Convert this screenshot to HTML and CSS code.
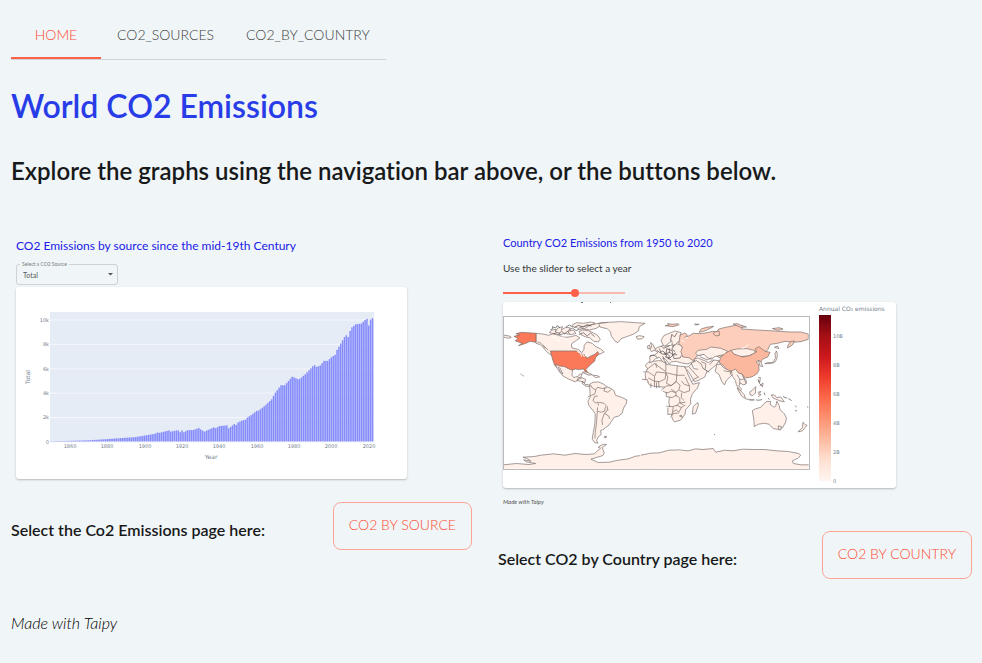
FILE: index.html
```html
<!DOCTYPE html>
<html lang="en">
<head>
<meta charset="utf-8">
<title>World CO2 Emissions</title>
<link rel="stylesheet" href="styles.css">
</head>
<body>
<nav class="tabs">
  <a class="tab tab-active" href="#home">HOME</a>
  <a class="tab" href="#sources">CO2_SOURCES</a>
  <a class="tab" href="#countries">CO2_BY_COUNTRY</a>
</nav>
<main>
  <h1>World CO2 Emissions</h1>
  <h2>Explore the graphs using the navigation bar above, or the buttons below.</h2>
  <div class="columns">
    <section class="column">
      <div class="preview preview-source">
        <h3 class="preview-title">CO2 Emissions by source since the mid-19th Century</h3>
        <div class="field">
          <label for="source">Select a CO2 Source</label>
          <select id="source"><option>Total</option></select>
          <svg class="caret" viewBox="0 0 5 3" aria-hidden="true"><path d="M0 0H5L2.500 2.500Z"/></svg>
        </div>
        <div class="card">
          <svg class="chart" viewBox="0 0 391 192" role="img" aria-label="Total emissions by year">
            <rect class="plot" x="34" y="25" width="324" height="130"/>
            <path class="grid-lines" d="M34 33H358M34 57.400H358M34 81.800H358M34 106.200H358M34 130.600H358"/>
            <g id="bars"></g>
            <path class="grid-lines zero" d="M34 155H358"/>
            <g class="tick end"><text x="33" y="35">10k</text><text x="33" y="59">8k</text><text x="33" y="84">6k</text><text x="33" y="108">4k</text><text x="33" y="132">2k</text><text x="33" y="157">0</text></g>
            <g class="tick mid"><text x="54" y="161">1860</text><text x="91" y="161">1880</text><text x="129" y="161">1900</text><text x="166" y="161">1920</text><text x="203" y="161">1940</text><text x="241" y="161">1960</text><text x="278" y="161">1980</text><text x="315" y="161">2000</text><text x="353" y="161">2020</text></g>
            <text class="axis mid" x="195" y="172">Year</text>
            <text class="axis mid" transform="translate(14 90) rotate(-90)">Total</text>
          </svg>
        </div>
      </div>
      <div class="action action-source">
        <p class="action-label">Select the Co2 Emissions page here:</p>
        <button class="button" type="button">CO2 BY SOURCE</button>
      </div>
    </section>
    <section class="column">
      <div class="preview preview-country">
        <h3 class="preview-title">Country CO2 Emissions from 1950 to 2020</h3>
        <label class="slider-label" for="year">Use the slider to select a year</label>
        <input class="slider" id="year" type="range" min="1950" max="2020" value="1992">
        <div class="card">
          <svg class="chart" viewBox="0 0 393 186" role="img" aria-label="World map of annual emissions">
            <defs>
              <linearGradient id="reds" x1="0" y1="0" x2="0" y2="1">
                <stop offset="0" stop-color="#67000d"/><stop offset=".125" stop-color="#a50f15"/><stop offset=".25" stop-color="#cb181d"/><stop offset=".375" stop-color="#ef3b2c"/><stop offset=".5" stop-color="#fb6a4a"/><stop offset=".625" stop-color="#fc9272"/><stop offset=".75" stop-color="#fcbba1"/><stop offset=".875" stop-color="#fee0d2"/><stop offset="1" stop-color="#fff5f0"/>
              </linearGradient>
              <clipPath id="frame"><rect x="0" y="0" width="918" height="459"/></clipPath>
            </defs>
            <path class="cut" d="M78 .5h2M107 .5h1"/>
            <g transform="translate(0 14) scale(.333)" clip-path="url(#frame)">
              <g class="land" transform="translate(-24 -20)">
                <path d="M123 72l20 2 18 4 14-5 22 7 16 4 16-2 14-4 12 8-12 8-14 10 2 12 18 4 12 10 6-10 1-12 8-10 16 4 10 10 14 6 12 10-14 7-16 4-8 8-12 2-12 4-10-8-8 2-10-7-20-4H166l-12-10-10-12-8-8-13-4z"/>
                <path d="M163 70l8-8 12-2-2 8 8-12 14-4-4 10 14-8 14 2-8 10 16-4 8 10-14 4-20-4-12 4-16-2zM233 46l12-6 20 2 24-4 12 4-20 8-12 8-16 2-8-6-12-2zM252 66l12-4 16 2 14 6 14 8 8 12-6 8-14-2-10-10-16-4-12-6zM254 54l18-4 20-4 26-6 22-1-20 8-16 10-20 5-14-2z"/>
                <path d="M311 43l30-4 38-2 42 3 30 2-18 10-2 12-14 10-16 6-22 8-10 12-8-4-12-16-2-12-10-10-20-4z"/>
                <path d="M424 82l10-3 14 3-6 6-14 2z"/>
                <path class="usa" d="M123 72v27l-18-3-12 6-22 7 10-8-20-6 8-8-12-6 16-4-10-4 16-4zM166 125h78l14 8 12 4 6 10 14-8 10-4 8-8 4 6-10 12-3 11-10 8-10 10-6 7 6 9-1 7-7-10-5-8-14 2-10-2-12 4-8 4-12-7-13-5-12-2-6-5-5-14z"/>
                <path d="M24 77l18 3 7 4-8 3-17-4M128 97l10 5 12 12 10 8M145 108l4 8"/>
                <path d="M182 165l12 5 14 2 14 7 11 4-2 14 5 8 14-4 4-6 8-2-5 14-7 3-8 8-20-8-18-10-10-12-8-12zM190 172l6 16 8 6-9-18M250 205l12 1 10 4-2 10-12-4-12-2zM262 216l10 10 8 0 6 6-12-1-12-8z"/>
                <path d="M262 189l12-1 18 8-10 2zM293 198l14 1 7 4-12 2zM76 194l4 1M81 197l6 4"/>
                <path d="M284 225l11-6 16-1 16 7 8 7 12 5 10 7 5 14 20 7 14 7-2 12-8 12-4 16-12 9-12 3-8 12-8 12-10 7-7 6-8 3 2 12-8 6-6 11 4 9-10-2-7-10 3-20 5-26 1-30-8-12-11-13-3-13 7-12z"/>
                <path d="M286 226l6 10 10 6 6-8 14 4 14-3M303 242l-4 13-13 4-8 5M330 235l-3 10 12 4 10-8M309 260l-10 2-5 12 8 7 7-2 2 10M311 279l16 3 10 10 2 12M309 306l8 3 12-3 3-14M338 301l-8 12 12 8 2 8M329 311l-8 22 2 14M308 294l-3 46-4 30-1 18"/>
                <path d="M327 383l8-2-2 5zM24 467l40-4 38 3 20-3-28-5-8-6 22 4-12-8-12-4 34-2 20-4 38-4 34 4 30-5 34 3 24-2 10-9 9-8-7-3 9-6 8-3 8 1-13 9 6 16-4 8-36 11 22 10 34-1 20-5 36-5 22-8 16-2 30 0v49H24z"/>
                <path class="rough" d="M166 62l8-5-2-5 10 4 4-7 9 6M192 72l8-6 9 8 8-8 8 7M213 53l10-6 9 5M238 55l12-7 15 5 12-7 12 4M252 76l13-6 12 10 10-9 12 11M175 74l12-5 10 6M223 62l10-6 10 8 10-5"/>
                <path class="lake" d="M170 82l16 6M188 92l8 3M203 80l8 10 8 2M220 98l8 6M247 127l10 5 3 10M262 132l6 10 8-8M270 136l10 5"/>
              </g>
              <g class="land" transform="translate(441 -20)">
                <path d="M-14 168l10-9 16-3 15-2 20 3 2 8 15 2 20 3 22 2 9 25 14 28 20-5-6 16-15 17-6 17 1 14-15 17-3 15-13 17-18 5-6-8-6-28-5-22 2-20-9-14-2-12-14-1-20-2-15-4-11-14-2-18 7-17z"/>
                <path d="M-10 181l24-18 34 24 0-28M18 161l2 14M48 190l33 8 1-30M81 198l24 0M14 202l6-14 28 3-2 18-16 8-16-1zM48 190l6 14-4 18 14 7 15-12 2-19M-20 188h15l18 12M-24 210l16 1 4 10M-5 206l19 10 0 18M3 222v14M20 219v18M26 217l2 19M35 242l15-12 14-1 15-12 12 11-4 14-10 8-12-4-14 5-12-5M95 215l8 10 16 5 0 15-16 5-15-7M106 203l13 27M50 248l-1 14 18 3 12-7 11 9 0 14 17-2M64 240l14 9 1 13M49 291l20 1 13-4 12 7 13-8M54 295l0 21 14-2 2-21M68 308l12-6 7 7 8-14M80 291l9-11 12 7M96 250l-2 15 8 8M62 325l9-12 16-2M89 320l6-2 2 6z"/>
                <path d="M130 292l14-12 2 8-9 24-9 3z"/>
                <path d="M0 160v-20l13-2 11-9-12-7 8-6 18-7 12 1 13-2 12-7 18 7 12 15 15 7-2 8 9 8 7 9-10 5-12 4-17-3-16-5-14 2-7 6-10-13-9-5 9 16-9-4-10-14-12 4-10 10z"/>
                <path d="M34 93l8-14 18-8 16-6 18 5-3 10 4 16-12 3-8 10-7 2-2-17-11 9-10 8-7-7zM0 119l6-5-4-14 7 5 8 16-12 6zM-7 110l6-3 2 9-7 3z"/>
                <path class="rough" d="M20 122l10 8 9-5 9 8 12-4 8 7 10-5M29 118l5 15 14 3 3-18 16 6 2 13 13-1M42 132l10 4-5 6 13 4 9-8M58 117l1 14M34 110l8 7 17-8M74 104l-8 16 10 7M68 136l5 12 18-2 4-8M0 140l12-3 11 8M51 132l8 8-3 10M82 70l-8 13-8-8-4 20M48 143l16 9M38 141l6 8"/>
                <path class="russia" d="M91 77l14-6 8 6-8 8 16-7 9-6 24 1 18-3 17-4 12 1 6-8 20-5 36-7 18 4-6 8 45 3 55 3 45 3 33 0 23 6v16l-22 7-26 2-22-3-22 6-22 3-8 16-11 12-11 11-8-10-10-10-18 8-24 6-36-5-18 5-10 7-9-7-30-5-28 7-10 15-14-10-18-2-6-16 5-14-11-10z"/>
                <path d="M145 123l26-3 12-7 30 4 21 9-8 10-14 2-17 4-11 8-13-6-8-9-18 4-8-7zM132 150l12-4 20 8 12 6 13-8 19 2-8 12-12 10-14 12-17-12-13-9zM150 142l22 10 15-7M154 157l14 6-2 18 13 8M180 166l12-14"/>
                <path d="M244 123l18-4 30-1 20 5 7 7-23 10-28 2-18-8z"/>
                <path class="china" d="M212 146l14-14 17-9 9 11 26 9 22-4 20-11-3-10 11-6 18 14 15 3-7 14-16 7-5 9-5-6-9 5 8 7 1 18-7 11-15 9-19 3-11-12-24 0-15-7-11-12-7-8-11-7z"/>
                <path d="M201 165l11 0 9 10 14 7 20 7-12 12-13 12-6 14-8-10-8-21-12-9 3-12zM222 184l22 5-3 8M239 185l11 4"/>
                <path d="M245 186l12-7 9 12 10 3 6 11 8 10-1 9-9 3-8-6-5 9 8 9-3 9-12-21-3-13-9-13zM262 196l8 14 12 0M270 210l0 15M280 201l9 22"/>
                <path d="M104 174l12-2 12-12 12-6 14 10 6 14 12 7-7 18-18 10-13 4-8-14-11-17zM118 173l10 12 16 18M124 161l8 17 13 2M127 217l6-8 15-6"/>
                <path d="M326 154l7 3 6 15-8-2zM345 163l10-3 14 0 8-13-1-14 4-8 3 10-2 15-6 9-14 4zM374 114l10-4 3 8z"/>
                <path class="russia" d="M414 110l8-13 12-2-6 12-14 9z"/>
                <path class="pale" d="M148 69l6-10 16-5 22-3-12 7-18 8zM194 68l14-3 1 13-10 2-9-6zM46 49l12-2-5-4 16 2 14-2 5 3-18 6zM134 44l14 1-10 2zM250 44l12-1 12 5 16 5-18 1zM368 58l20-3 12 4-16 4z"/>
                <path d="M262 236l8 6 14 15 3 11-12-8zM288 269l14 2 12 1-15 1M300 248l8-5 10-11-1 19-8 8-8-2zM324 249l10-2-8 7 8 2-9 7M325 205l7 0-2 14-5-4M330 230l10-9-2 12M364 257l10 0 7 8 12-2 11 15-13-3-12-5-9-4z"/>
                <path class="rough" d="M400 262l12 5M416 268l10 6M437 289l3 5M436 303l6 3M472 292l4 3M319 272l8 1 10-2M343 250l3 8M355 266l4 5M325 210l5 13 8 9M193 376h3"/>
                <path d="M308 304l9-5 16-5 9-10 9-7 12 0-2 8 12 9 5-3 3-15 7 12 3 13 13 13 6 12-2 12-9 17-12 6-16-3-7-6-6-7-14-3-18 3-13 7 0-15z"/>
                <path d="M385 350l10 2-2 10-5 0zM460 339l7 8 5 1-7 8-7 9-13 3 13-13z"/>
                <path class="fill-only" d="M-30 437L2 432 28 431 57 423 115 425 137 419 190 418 198 429 225 423 278 420 346 421 416 427 447 433 453 438 428 455 431 463 481 467V485H-30z"/>
                <path class="coast" d="M-27 438l29-6 26-1 29-8 32-1 26 3 22-6 23 2 30-3 8 11 27-6 24 2 29-5 38 1 30 0 36 4 34 2 31 6 6 5-8 9-17 8 3 8 24 4 26 0"/>
                <path class="lake" d="M95 93l8 4M276 117l11-3 8-8M106 86l9-1"/>
              </g>
            </g>
            <rect class="map-frame" x=".5" y="14.500" width="306" height="153"/>
            <text class="axis" x="316" y="9">Annual CO₂ emissions</text>
            <rect x="316" y="13" width="12" height="166" fill="url(#reds)"/>
            <g class="tick"><text x="330" y="36">10B</text><text x="330" y="65">8B</text><text x="330" y="94">6B</text><text x="330" y="123">4B</text><text x="330" y="152">2B</text><text x="330" y="181">0</text></g>
          </svg>
        </div>
        <p class="small-credit">Made with Taipy</p>
      </div>
      <div class="action">
        <p class="action-label">Select CO2 by Country page here:</p>
        <button class="button" type="button">CO2 BY COUNTRY</button>
      </div>
    </section>
  </div>
</main>
<footer>Made with Taipy</footer>
<script src="chart.js"></script>
</body>
</html>
```
FILE: styles.css
```css
* { box-sizing: border-box; }
body {
  margin: 0;
  padding: 11px 10px 24px 11px;
  background: #f0f5f7;
  color: #17191a;
  font: 300 16px/24px Lato, "Liberation Sans", sans-serif;
  font-variant-ligatures: none;
}
h1, h2, h3, p { margin: 0; }
.tabs {
  display: flex;
  width: fit-content;
  height: 49px;
  border-bottom: 1px solid #cfd4d6;
}
.tab {
  min-width: 90px;
  padding: 12px 16px;
  color: #3c3e3f;
  font-size: 14px;
  text-align: center;
  text-decoration: none;
}
.tab-active { color: #ff4a30; border-bottom: 2px solid #ff6049; }
h1 {
  margin-top: 26px;
  color: #283ce8;
  font-size: 32px;
  font-weight: 600;
  line-height: 40px;
}
h2 {
  margin-top: 28px;
  font-size: 24px;
  font-weight: 600;
  line-height: 34px;
}
.columns {
  display: grid;
  grid-template-columns: 461fr 474fr;
  gap: 26px;
  align-items: start;
  margin-top: 46px;
}
.preview { padding-left: 5px; }
.preview-source { padding-top: 4px; }
.preview-title {
  color: #2020e8;
  font-size: 12px;
  font-weight: 400;
  line-height: 16px;
}
.preview-country .preview-title { padding-top: 1px; font-size: 11px; }
.field { position: relative; width: 102px; margin-top: 10px; }
.field label {
  position: absolute;
  top: -3px;
  left: 4px;
  padding: 0 2px;
  background: #f0f5f7;
  color: #777c80;
  font-size: 5px;
  font-weight: 400;
  line-height: 6px;
}
.field select {
  display: block;
  width: 100%;
  height: 21px;
  padding: 0 6px;
  border: 1px solid #ccd2d5;
  border-radius: 3px;
  background: transparent;
  color: #55595c;
  font: 400 7px/12px Lato, sans-serif;
  appearance: none;
}
.caret { position: absolute; top: 9px; right: 5px; width: 5px; height: 3px; fill: #555; }
.card {
  border-radius: 3px;
  background: #fff;
  box-shadow: 0 1px 2px #b5babd;
}
.preview-source .card { max-width: 391px; margin-top: 2px; }
.preview-country .card { max-width: 393px; }
.chart { display: block; width: 100%; }
.plot { fill: #e5ecf6; }
.grid-lines { fill: none; stroke: #f4f7fb; stroke-width: 1; }
#bars rect { fill: #858bfb; }
.tick { fill: #74808f; font: 5px "DejaVu Sans", sans-serif; }
.axis { fill: #74808f; font: 6px "DejaVu Sans", sans-serif; }
.end { text-anchor: end; }
.mid { text-anchor: middle; }
.slider-label {
  display: block;
  margin-top: 10px;
  color: #333638;
  font-size: 10px;
  font-weight: 400;
  line-height: 14px;
}
.slider {
  display: block;
  width: 122px;
  height: 8px;
  margin: 14px 0 5px;
  background: linear-gradient(to right, #ff6049 60%, #f9b9b0 60%) center / 100% 2px no-repeat;
  appearance: none;
}
.slider::-webkit-slider-thumb {
  width: 8px;
  height: 8px;
  border-radius: 50%;
  background: #ff6049;
  appearance: none;
}
.land { fill: #fff0ea; stroke: #756b68; stroke-width: 2; stroke-linejoin: round; }
.land .usa { fill: #fb7858; }
.land .russia, .land .pale { fill: #fdcebc; }
.land .china { fill: #fcb89e; }
.land .rough { fill: none; stroke: #4d4a4a; stroke-width: 2; }
.land .lake { fill: none; stroke: #fff; stroke-width: 3; }
.land .fill-only { stroke: none; }
.land .coast { fill: none; }
.map-frame { fill: none; stroke: #bbb; }
.cut { stroke: #777; }
.small-credit {
  margin-top: 9px;
  color: #555;
  font-size: 6px;
  font-style: italic;
  font-weight: 400;
  line-height: 10px;
}
.action {
  display: flex;
  justify-content: space-between;
  align-items: center;
  margin-top: 24px;
}
.action-source { margin-top: 23px; }
.action-label { padding-top: 8px; font-size: 16px; font-weight: 600; }
.button {
  height: 48px;
  padding: 0 15px 2px;
  border: 1px solid #ffa397;
  border-radius: 8px;
  background: transparent;
  color: #ff4a30;
  font: 300 14px/24px Lato, "Liberation Sans", sans-serif;
}
footer { margin-top: 32px; color: #000; font-style: italic; }
```
FILE: chart.js
```js
// [year, total in thousands]; years in between are interpolated.
const points = [
  [1850, 0.05], [1870, 0.14], [1880, 0.24], [1890, 0.35], [1895, 0.4], [1900, 0.53], [1905, 0.66],
  [1907, 0.78], [1908, 0.75], [1913, 0.95], [1914, 0.85], [1917, 0.95], [1918, 0.94], [1919, 0.8],
  [1920, 0.94], [1921, 0.8], [1923, 0.97], [1926, 0.98], [1929, 1.14], [1930, 1.03], [1932, 0.85],
  [1937, 1.2], [1938, 1.13], [1940, 1.3], [1944, 1.37], [1945, 1.12], [1948, 1.47], [1949, 1.4],
  [1950, 1.6], [1952, 1.75], [1954, 1.83], [1955, 2], [1957, 2.2], [1960, 2.55], [1961, 2.57],
  [1964, 2.92], [1968, 3.5], [1970, 4.05], [1973, 4.65], [1975, 4.65], [1979, 5.35], [1980, 5.3],
  [1982, 5.15], [1983, 5.17], [1986, 5.55], [1990, 6.2], [1991, 6.3], [1992, 6.15], [1994, 6.27],
  [1996, 6.65], [1998, 6.65], [2000, 6.95], [2002, 7.15], [2003, 7.55], [2005, 8.07], [2007, 8.6],
  [2008, 8.75], [2009, 8.6], [2010, 9.1], [2011, 9.4], [2013, 9.65], [2016, 9.7], [2018, 10],
  [2019, 10.1], [2020, 9.55], [2021, 10.03], [2022, 10.15]
];
const bars = document.getElementById("bars");
const step = 1.8675;
for (let i = 1; i < points.length; i++) {
  const [from, a] = points[i - 1];
  const [to, b] = points[i];
  for (let year = i === 1 ? from : from + 1; year <= to; year++) {
    const height = (a + (b - a) * (year - from) / (to - from)) * 12.2;
    const bar = document.createElementNS("http://www.w3.org/2000/svg", "rect");
    bar.setAttribute("x", 35.3 + (year - 1850) * step - 0.75);
    bar.setAttribute("y", 155 - height);
    bar.setAttribute("width", 1.5);
    bar.setAttribute("height", height);
    bars.append(bar);
  }
}
```
